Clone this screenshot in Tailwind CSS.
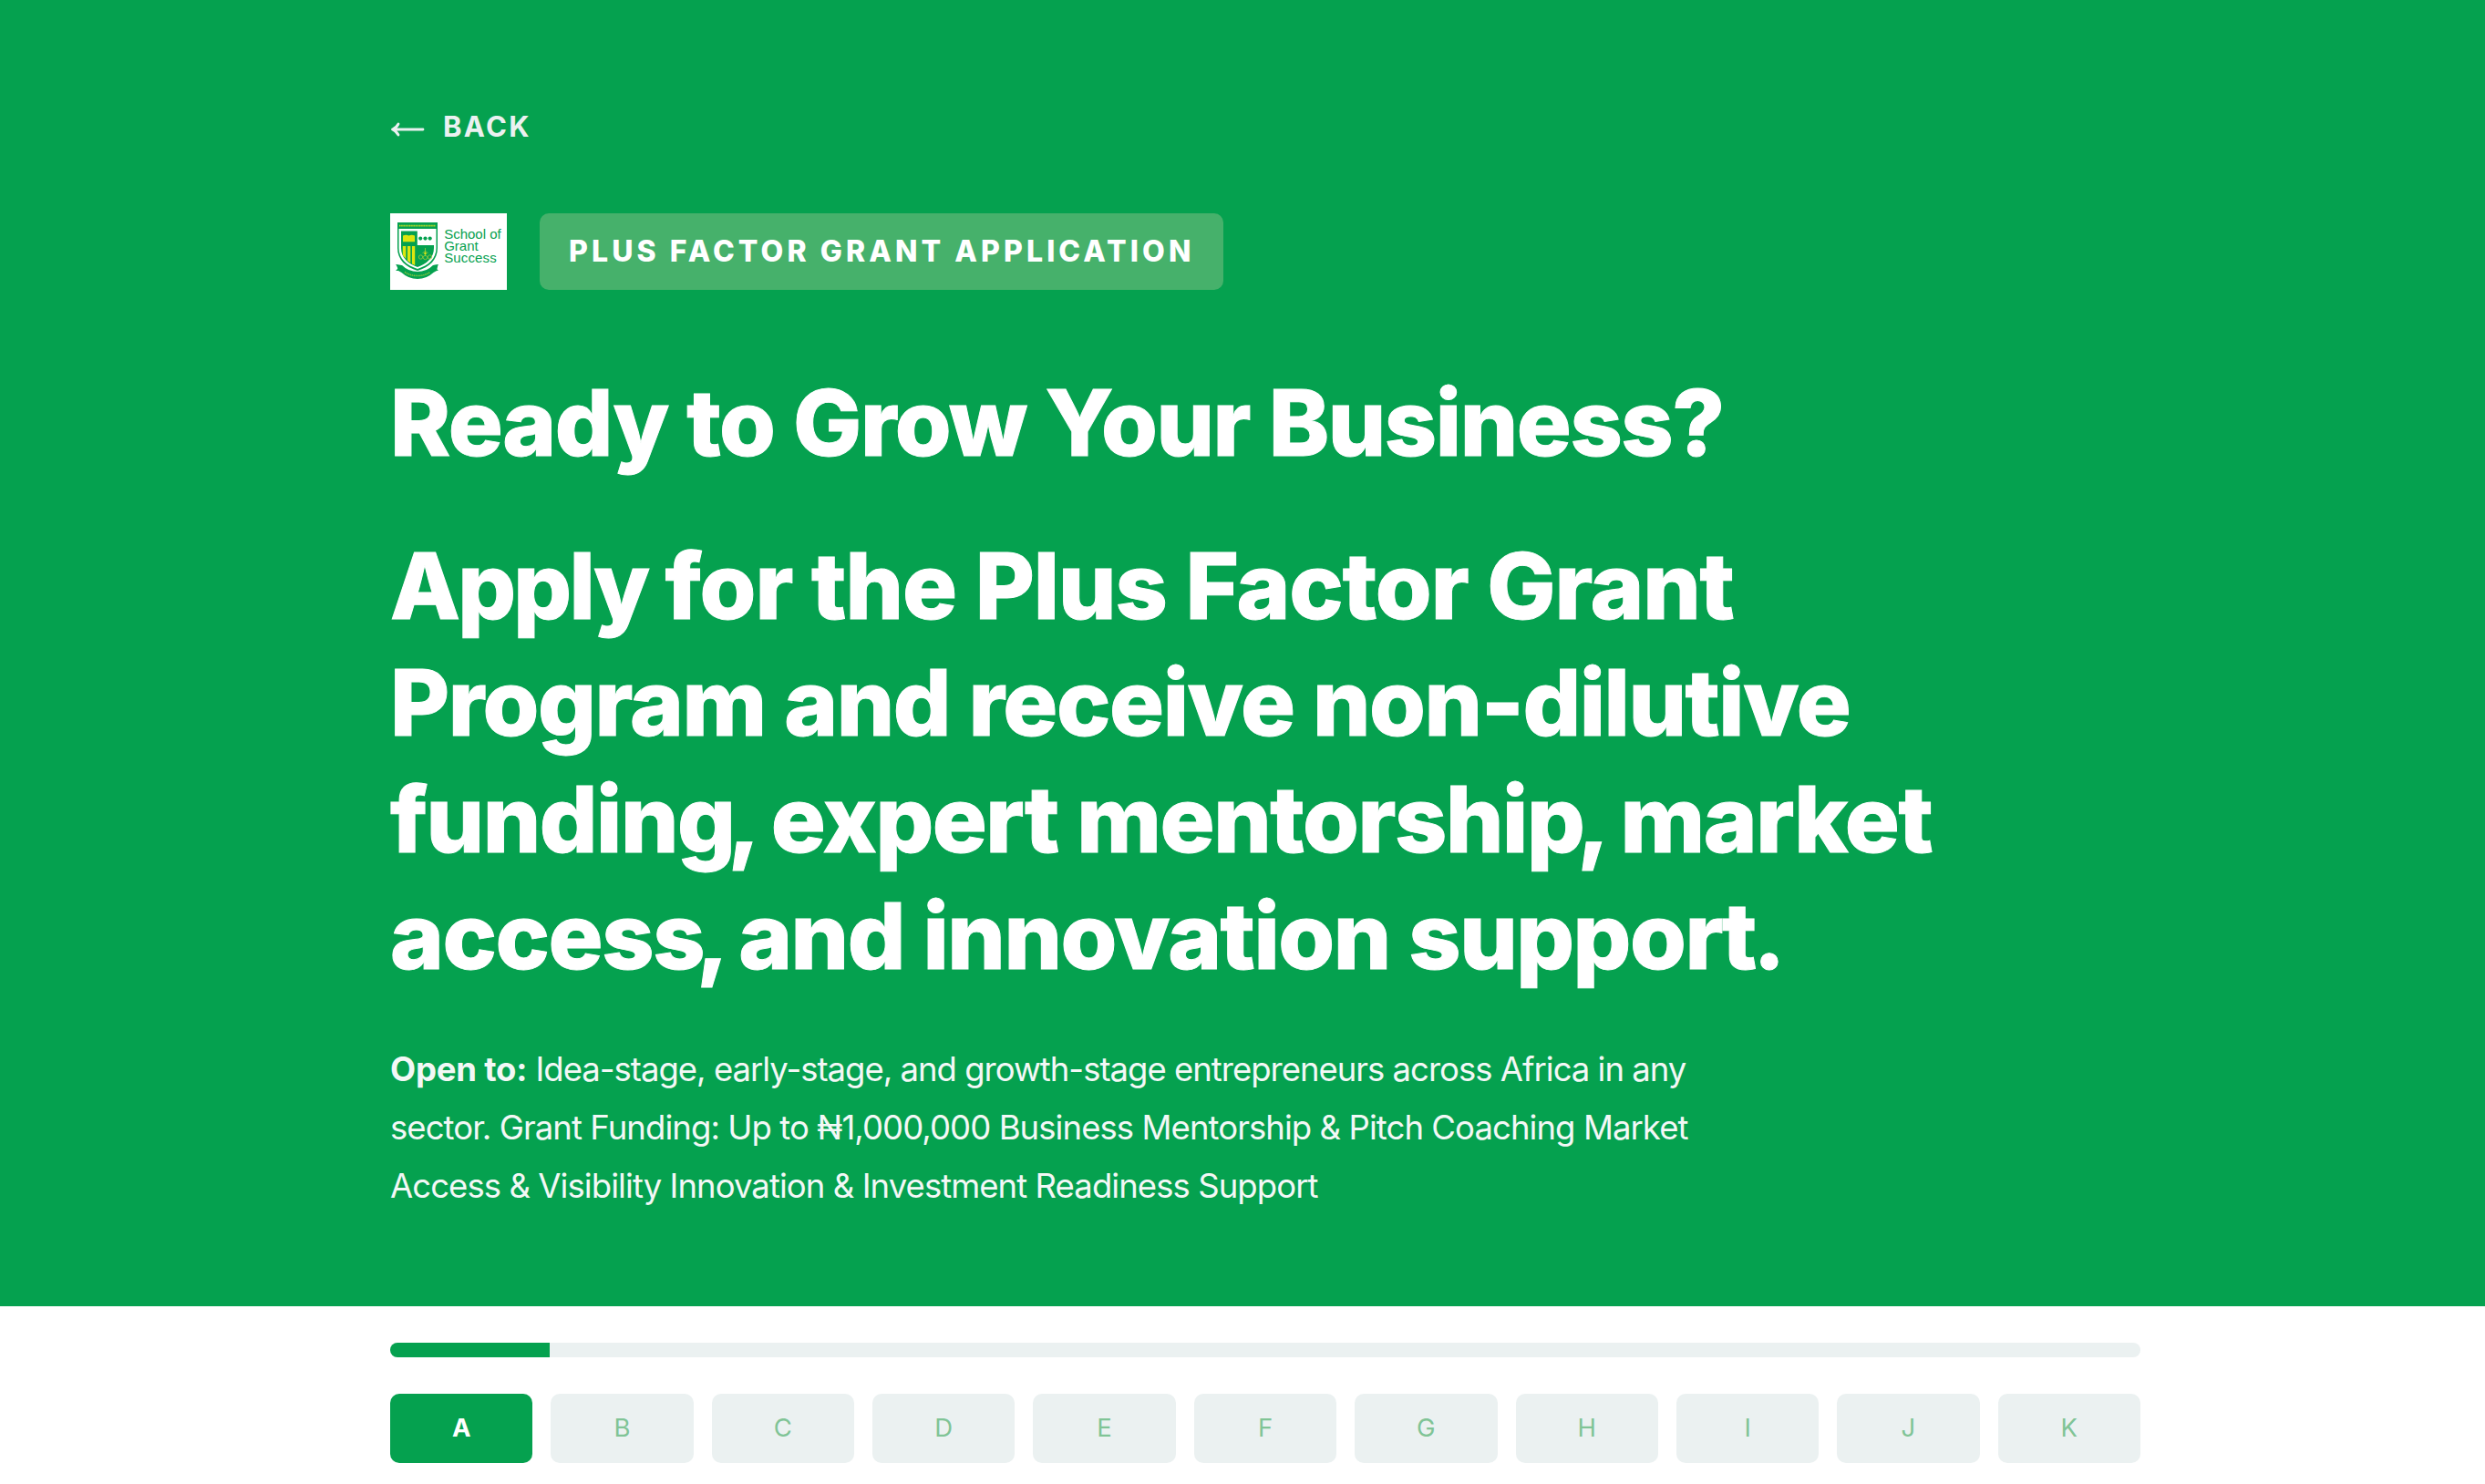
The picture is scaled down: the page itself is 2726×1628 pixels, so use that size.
<!DOCTYPE html>
<html lang="en">

<head>
  <meta charset="UTF-8" />
  <meta name="viewport" content="width=device-width, initial-scale=1.0" />
  <title>Plus Factor Grant Application</title>
  <script src="https://cdn.jsdelivr.net/npm/@tailwindcss/browser@4"></script>
</head>

<body class="bg-white font-['Inter',sans-serif] overflow-hidden">

  <!-- Hero -->
  <header class="bg-[#05a14f] text-white pl-[428px] pt-[115px] pb-[100px]">
    <a href="#" class="flex w-fit items-center gap-[20px] h-12 text-[31px] leading-[48px] font-bold tracking-[2.3px] text-[#ebf1f1]">
      <svg class="w-[38px] h-[20px] mt-[6px]" viewBox="0 0 38 20" fill="none" stroke="currentColor" stroke-width="2.8" stroke-linecap="round" stroke-linejoin="round">
        <path d="M36 10H2.500M9 4Q7 8 2.500 10Q7 12 9 16" />
      </svg>
      BACK
    </a>

    <div class="flex items-center gap-9 mt-[71px]">
      <!-- Logo -->
      <svg class="w-[128px] h-[84px] bg-white" viewBox="0 0 128 84">
        <path d="M6 56l6 1 1 6-7 0 3-3zM53 56l-6 1-1 6 7 0-3-3z" fill="#05a14f" />
        <path d="M8 10H52V38C52 51 43 59 30 63C17 59 8 51 8 38Z" fill="#05a14f" />
        <path d="M9.500 17H50.500V38C50.500 50 42 57 30 61C18 57 9.500 50 9.500 38Z" fill="#fff" />
        <path d="M12 19.500H29.800V35H48V38C48 49 40 55.500 30 59C20 55.500 12 49 12 38Z" fill="#05a14f" />
        <path d="M14 24.500Q17.500 23 20.500 24.500Q23.500 23 27 24.500V31.300H14Z" fill="#dce60f" />
        <path d="M13.800 36H17.300V50L13.800 46ZM19 36H22.300V54.500L19 52ZM24 36H27.200V57L24 55.500Z" fill="#dce60f" />
        <g fill="#05a14f">
          <circle cx="33.200" cy="27.600" r="2.100" />
          <circle cx="38.500" cy="27.600" r="2.100" />
          <circle cx="43.700" cy="27.600" r="2.100" />
        </g>
        <g fill="none" stroke="#9ccc38" stroke-width=".8">
          <path d="M38.500 38V47M35.500 44L38.500 41L41.500 44" />
          <circle cx="33.500" cy="48" r="2.200" />
          <circle cx="38.500" cy="48.500" r="2.200" />
          <circle cx="43.500" cy="48" r="2.200" />
        </g>
        <circle cx="38.500" cy="44" r="1.300" fill="#dce60f" />
        <path d="M10 13.600H50" stroke="#c6dc24" stroke-width="1.800" stroke-dasharray="1.500 .7" />
        <path d="M7 56.500L13 57Q20 64 30 64T47 57L52.500 56.500L51 63L47.500 65Q40 72 30 72T12.500 65L9 63Z" fill="#05a14f" />
        <path d="M16 64.500Q22 68.500 30 68.500T44 64.500" fill="none" stroke="#8ec63f" stroke-width="1.600" stroke-dasharray="1.300 .8" />
        <g fill="#05a14f" font-family="Liberation Sans, sans-serif" font-size="15">
          <text x="59.200" y="28" textLength="62.500">School of</text>
          <text x="59.200" y="41.200" textLength="37.500">Grant</text>
          <text x="59.200" y="54.400" textLength="57.500">Success</text>
        </g>
      </svg>
      <div class="flex items-center w-[750px] h-[84px] rounded-[10px] bg-[#46b16b] px-8 text-[32px] font-extrabold tracking-[4.09px] whitespace-nowrap">PLUS FACTOR GRANT APPLICATION</div>
    </div>

    <h1 class="mt-[82px] text-[100px] leading-[128px] font-extrabold tracking-[-1.4px] whitespace-nowrap [-webkit-text-stroke:1px_white]">Ready to Grow Your Business?</h1>

    <h2 class="mt-[51px] text-[100px] leading-[128px] font-extrabold tracking-[-1.43px] whitespace-nowrap [-webkit-text-stroke:1px_white]">
      <span class="tracking-[-2.7px]">Apply </span><span class="tracking-[-1.1px]">for the Plus Factor Grant</span><br />
      Program and receive non-dilutive<br />
      fundin<span class="tracking-[-8.5px]">g,</span> expert mentorshi<span class="tracking-[-8.5px]">p,</span> market<br />
      acces<span class="tracking-[-9.5px]">s,</span> and innovation suppor<span class="tracking-[-4px]">t</span>.
    </h2>

    <p class="mt-[50px] text-[36.5px] leading-[64px] whitespace-nowrap text-[#f3f8f6]">
      <strong class="font-bold tracking-[-0.2px]">Open to:</strong><span class="tracking-[-1px]"> Idea-stage, early-stage, and growth-stage entrepreneurs across Africa in any</span><br />
      <span class="tracking-[-0.93px]">sector. Grant Funding: Up to ₦1,000,000 Business Mentorship &amp; Pitch Coaching Market<br />
      Access &amp; Visibility Innovation &amp; Investment Readiness Support</span>
    </p>
  </header>

  <!-- Step progress -->
  <nav class="ml-[428px] w-[1920px] pt-10">
    <div class="h-4 rounded-full bg-[#ebf1f1] overflow-hidden">
      <div class="h-full bg-[#05a14f]" style="width: 9.12%"></div>
    </div>
    <div class="grid grid-cols-11 gap-5 mt-10 text-[27.5px] text-[#80c496] text-center leading-[74px]">
      <div class="h-[76px] rounded-[10px] bg-[#05a14f] text-white font-bold">A</div>
      <div class="h-[76px] rounded-[10px] bg-[#ebf1f1]">B</div>
      <div class="h-[76px] rounded-[10px] bg-[#ebf1f1]">C</div>
      <div class="h-[76px] rounded-[10px] bg-[#ebf1f1]">D</div>
      <div class="h-[76px] rounded-[10px] bg-[#ebf1f1]">E</div>
      <div class="h-[76px] rounded-[10px] bg-[#ebf1f1]">F</div>
      <div class="h-[76px] rounded-[10px] bg-[#ebf1f1]">G</div>
      <div class="h-[76px] rounded-[10px] bg-[#ebf1f1]">H</div>
      <div class="h-[76px] rounded-[10px] bg-[#ebf1f1]">I</div>
      <div class="h-[76px] rounded-[10px] bg-[#ebf1f1]">J</div>
      <div class="h-[76px] rounded-[10px] bg-[#ebf1f1]">K</div>
    </div>
  </nav>

</body>

</html>
